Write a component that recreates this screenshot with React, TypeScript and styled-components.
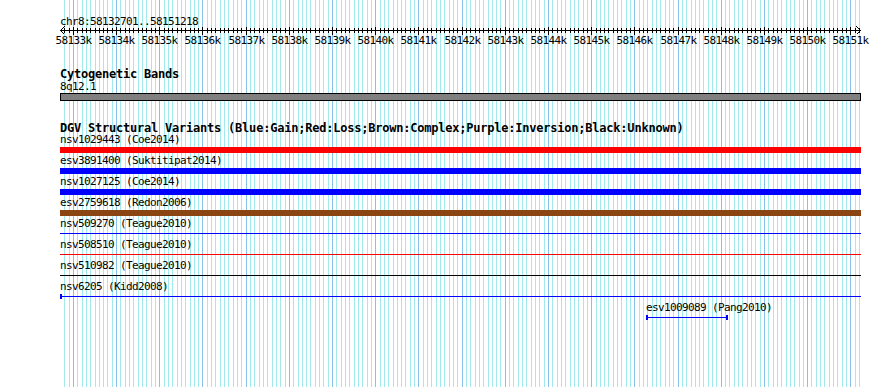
import styled, { createGlobalStyle } from 'styled-components';

const START = 58132701;
const END = 58151218;
const PX_PER_BP = 0.04319;
const LEFT = 60;
const TRACK_WIDTH = 801;

const toX = (bp: number) => Math.round(LEFT + (bp - START) * PX_PER_BP);

const COLORS = {
  red: '#ff0000',
  blue: '#0000ff',
  brown: '#8b4513',
  black: '#000000',
  gridMinor: '#a2eaee',
  gridMajor: '#88c2ea',
  band: '#808080',
};

type Variant = {
  name: string;
  color: string;
  thick?: boolean;
  offset?: number;
  width?: number;
  capStart?: boolean;
  capEnd?: boolean;
};

const VARIANTS: Variant[] = [
  { name: 'nsv1029443 (Coe2014)', color: COLORS.red, thick: true },
  { name: 'esv3891400 (Suktitipat2014)', color: COLORS.blue, thick: true },
  { name: 'nsv1027125 (Coe2014)', color: COLORS.blue, thick: true },
  { name: 'esv2759618 (Redon2006)', color: COLORS.brown, thick: true },
  { name: 'nsv509270 (Teague2010)', color: COLORS.blue },
  { name: 'nsv508510 (Teague2010)', color: COLORS.red },
  { name: 'nsv510982 (Teague2010)', color: COLORS.black },
  { name: 'nsv6205 (Kidd2008)', color: COLORS.blue, capStart: true },
  { name: 'esv1009089 (Pang2010)', color: COLORS.blue, offset: 586, width: 82, capStart: true, capEnd: true },
];

const GlobalStyle = createGlobalStyle`
  html, body {
    margin: 0;
    padding: 0;
    background: #fff;
  }
  body {
    font-family: "DejaVu Sans Mono", "Liberation Mono", monospace;
    color: #000;
  }
`;

const Canvas = styled.div`
  position: relative;
  width: 890px;
  height: 387px;
  overflow: hidden;
  background: #fff;
`;

const GridLayer = styled.svg`
  position: absolute;
  left: 0;
  top: 0;
`;

const Content = styled.div`
  position: relative;
  z-index: 1;
  display: flex;
  flex-direction: column;
  padding-left: ${LEFT}px;
`;

const SmallText = styled.div`
  font-size: 11px;
  letter-spacing: -0.62px;
  line-height: 11px;
  white-space: pre;
`;

const Landmark = styled(SmallText)`
  margin-top: 16px;
`;

const TrackTitle = styled.div<{ $gap: number; $after?: number }>`
  margin-top: ${(p) => p.$gap}px;
  margin-bottom: ${(p) => p.$after ?? 0}px;
  font-size: 12px;
  font-weight: bold;
  letter-spacing: -0.22px;
  line-height: 10px;
  white-space: pre;
`;

const BandLabel = styled(SmallText)`
  margin-top: 2px;
`;

const Band = styled.div`
  margin-top: 1px;
  width: ${TRACK_WIDTH}px;
  height: 8px;
  box-sizing: border-box;
  border: 1px solid #000;
  background: ${COLORS.band};
`;

const Row = styled.div`
  display: flex;
  flex-direction: column;
  height: 21px;
`;

const Lane = styled.div`
  height: 10px;
  width: ${TRACK_WIDTH}px;
`;

const Feature = styled.div<{ $color: string; $thick?: boolean; $capStart?: boolean; $capEnd?: boolean }>`
  position: relative;
  margin-top: ${(p) => (p.$thick ? 2 : 4)}px;
  height: ${(p) => (p.$thick ? 6 : 1)}px;
  background: ${(p) => p.$color};

  &::before,
  &::after {
    content: '';
    position: absolute;
    top: -2px;
    width: 2px;
    height: 5px;
    background: ${(p) => p.$color};
  }
  &::before {
    left: 0;
    display: ${(p) => (p.$capStart ? 'block' : 'none')};
  }
  &::after {
    right: 0;
    display: ${(p) => (p.$capEnd ? 'block' : 'none')};
  }
`;

const RulerSvg = styled.svg`
  display: block;
  overflow: visible;
`;

const TickLabel = styled.text`
  font-family: "DejaVu Sans Mono", "Liberation Mono", monospace;
  font-size: 11px;
  letter-spacing: -0.62px;
`;

const hundreds: number[] = [];
for (let bp = Math.ceil(START / 100) * 100; bp <= END; bp += 100) hundreds.push(bp);

function Grid() {
  return (
    <GridLayer width={890} height={387} shapeRendering="crispEdges">
      {hundreds.map((bp) => (
        <rect
          key={bp}
          x={toX(bp)}
          y={0}
          width={1}
          height={387}
          fill={bp % 1000 === 0 ? COLORS.gridMajor : COLORS.gridMinor}
        />
      ))}
    </GridLayer>
  );
}

function Ruler() {
  const axisEnd = 860 - LEFT;
  return (
    <RulerSvg width={TRACK_WIDTH} height={21} shapeRendering="crispEdges">
      <rect x={0} y={3} width={axisEnd + 1} height={1} fill="#000" />
      {hundreds.map((bp) => {
        const x = toX(bp) - LEFT;
        const major = bp % 1000 === 0;
        return <rect key={bp} x={x} y={major ? 0 : 1} width={1} height={major ? 8 : 5} fill="#000" />;
      })}
      <path d="M0.5 3.5 L4.5 -0.5 M0.5 3.5 L4.5 7.5" stroke="#000" fill="none" />
      <path d={`M${axisEnd + 0.5} 3.5 L${axisEnd - 3.5} -0.5 M${axisEnd + 0.5} 3.5 L${axisEnd - 3.5} 7.5`} stroke="#000" fill="none" />
      {hundreds
        .filter((bp) => bp % 1000 === 0)
        .map((bp) => (
          <TickLabel key={bp} x={toX(bp) - LEFT + 0.5} y={17} textAnchor="middle">
            {`${bp / 1000}k`}
          </TickLabel>
        ))}
    </RulerSvg>
  );
}

export default function App() {
  return (
    <>
      <GlobalStyle />
      <Canvas>
        <Grid />
        <Content>
          <Landmark>chr8:58132701..58151218</Landmark>
          <Ruler />

          <TrackTitle $gap={21}>Cytogenetic Bands</TrackTitle>
          <BandLabel>8q12.1</BandLabel>
          <Band />

          <TrackTitle $gap={22} $after={1}>
            DGV Structural Variants (Blue:Gain;Red:Loss;Brown:Complex;Purple:Inversion;Black:Unknown)
          </TrackTitle>
          {VARIANTS.map((v) => (
            <Row key={v.name}>
              <SmallText style={v.offset ? { marginLeft: v.offset } : undefined}>{v.name}</SmallText>
              <Lane>
                <Feature
                  $color={v.color}
                  $thick={v.thick}
                  $capStart={v.capStart}
                  $capEnd={v.capEnd}
                  style={v.offset ? { marginLeft: v.offset, width: v.width } : undefined}
                />
              </Lane>
            </Row>
          ))}
        </Content>
      </Canvas>
    </>
  );
}
